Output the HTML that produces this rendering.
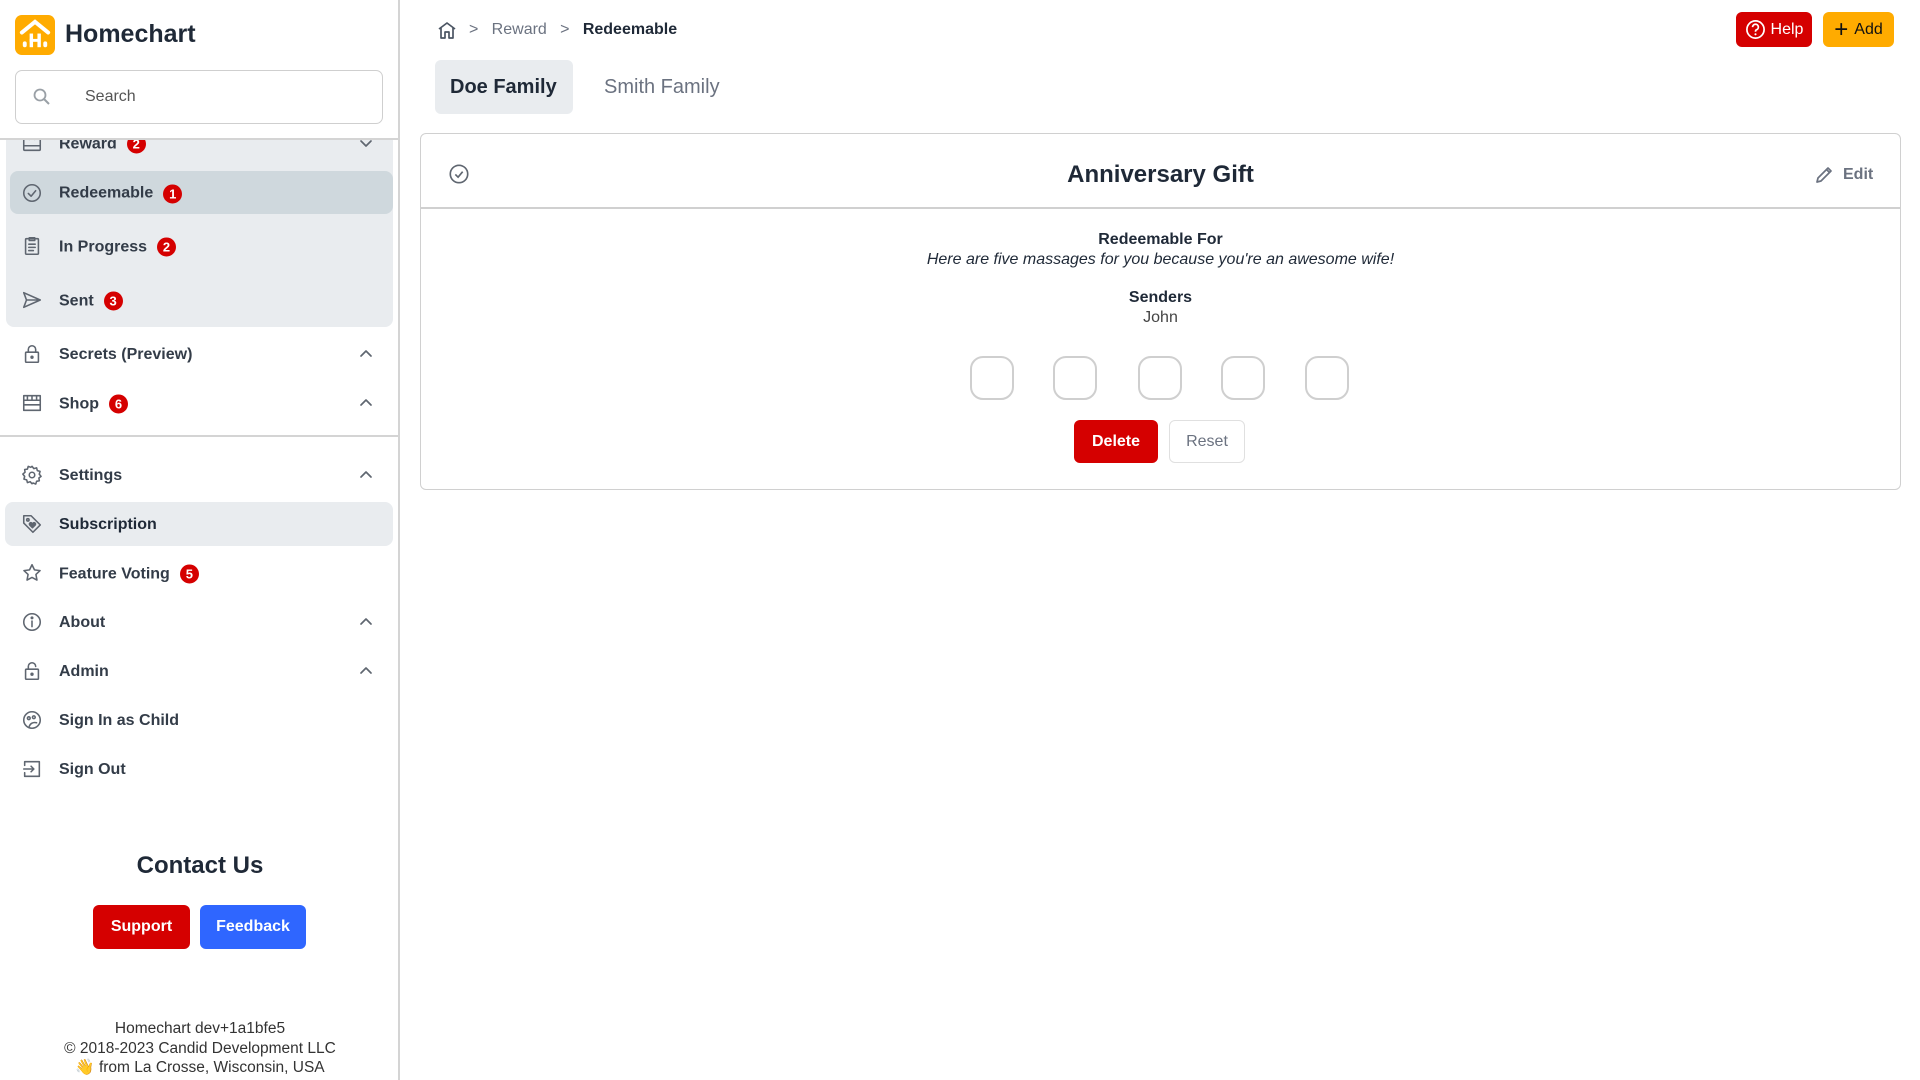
<!DOCTYPE html>
<html><head><meta charset="utf-8"><style>
*{box-sizing:border-box;margin:0;padding:0}
body{width:1920px;height:1080px;overflow:hidden;background:#fff;font-family:"Liberation Sans","DejaVu Sans",sans-serif;color:#1f2937;position:relative}
.abs{position:absolute}
.side{position:absolute;left:0;top:0;width:400px;height:1080px;border-right:2px solid #d4d4d4;background:#fff}
.row{position:absolute;left:10px;width:383px;height:44px;display:flex;align-items:center;font-size:16px;font-weight:bold;color:#333c48}
.row svg{position:absolute;left:11px;width:22px;height:22px}
.row svg.chev{left:349px;width:14px;height:14px}
.row .t{position:absolute;left:49px;top:50%;transform:translateY(-45%);white-space:nowrap;display:flex;align-items:center}
.badge{display:inline-flex;align-items:center;justify-content:center;width:19px;height:19px;border-radius:50%;background:#d50000;color:#fff;font-size:13px;margin-left:10px}
.ic{fill:none;stroke:#5f6670;stroke-width:1.7;stroke-linecap:round;stroke-linejoin:round}
.btn{position:absolute;border-radius:6px;display:flex;align-items:center;justify-content:center;font-weight:bold;font-size:16px}
.box{position:absolute;top:356px;width:44px;height:44px;border:2px solid #cfcfcf;border-radius:13px}
</style></head><body>
<div class="side">
  <svg class="abs" style="left:15px;top:15px" width="40" height="40" viewBox="0 0 41 41"><rect width="41" height="41" rx="7" fill="#ffab00"/><path d="M7 18 L20.5 7 L34 18" fill="none" stroke="#fff" stroke-width="4" stroke-linecap="round"/><rect x="8" y="27" width="4" height="6" rx="2" fill="#fff"/><rect x="29" y="27" width="4" height="6" rx="2" fill="#fff"/><rect x="15" y="19" width="3.5" height="14" fill="#fff"/><rect x="23" y="19" width="3.5" height="14" fill="#fff"/><rect x="15" y="24.5" width="11" height="3" fill="#fff"/></svg>
  <div class="abs" style="left:65px;top:20px;font-size:25px;font-weight:bold;color:#1f2937">Homechart</div>
  <div class="abs" style="left:15px;top:70px;width:368px;height:54px;border:1.5px solid #cfcfcf;border-radius:7px"></div>
  <svg class="abs" style="left:33px;top:88px" width="18" height="18" viewBox="0 0 18 18"><circle cx="7" cy="7" r="5.5" fill="none" stroke="#9aa0a6" stroke-width="1.8"/><path d="M11 11 L16 16" stroke="#9aa0a6" stroke-width="2"/></svg>
  <div class="abs" style="left:85px;top:88px;font-size:16px;color:#555">Search</div>
  <div class="abs" style="left:6px;top:139px;width:387px;height:188px;background:#e9ecef;border-radius:0 0 8px 8px"></div>
  <div class="row" style="top:126px;height:34px;clip-path:inset(13px 0 0 0)"><svg viewBox="0 0 24 24" class="ic"><rect x="3" y="4" width="18" height="16" rx="1"/><path d="M3 15h18M9 8l3-3 3 3"/></svg><span class="t">Reward<span class="badge">2</span></span><svg class="chev ic" viewBox="0 0 14 14"><path d="M2 5l5 5 5-5"/></svg></div>
  <div class="abs" style="left:0;top:138px;width:398px;height:1.5px;background:#d4d4d4"></div>
  <div class="row" style="top:171px;height:43px;background:#cfd8dd;border-radius:8px"><svg viewBox="0 0 24 24" class="ic"><circle cx="12" cy="12" r="9"/><path d="M8 12.5l3 3 5-6"/></svg><span class="t">Redeemable<span class="badge">1</span></span></div>
  <div class="row" style="top:224px"><svg viewBox="0 0 24 24" class="ic"><rect x="5" y="4" width="14" height="17" rx="1"/><path d="M9 3h6v3H9zM8.5 10h7M8.5 13.5h7M8.5 17h5"/></svg><span class="t">In Progress<span class="badge">2</span></span></div>
  <div class="row" style="top:278px"><svg viewBox="0 0 24 24" class="ic"><path d="M3 4l18 8-18 8 3-8zM6 12h15"/></svg><span class="t">Sent<span class="badge">3</span></span></div>
  <div class="row" style="top:332px"><svg viewBox="0 0 24 24" class="ic"><rect x="5" y="10" width="14" height="11" rx="1"/><path d="M8 10V7a4 4 0 0 1 8 0v3"/><circle cx="12" cy="15.5" r="1" fill="#5f6670"/></svg><span class="t">Secrets (Preview)</span><svg class="chev ic" viewBox="0 0 14 14"><path d="M2 9l5-5 5 5"/></svg></div>
  <div class="row" style="top:381px"><svg viewBox="0 0 24 24" class="ic"><path d="M3 4h18v5H3zM3 9v11h18V9M7 4v5M12 4v5M17 4v5M3 14h18"/></svg><span class="t">Shop<span class="badge">6</span></span><svg class="chev ic" viewBox="0 0 14 14"><path d="M2 9l5-5 5 5"/></svg></div>
  <div class="abs" style="left:0;top:435px;width:398px;height:2px;background:#d4d4d4"></div>
  <div class="row" style="top:453px"><svg viewBox="0 0 24 24" class="ic"><circle cx="12" cy="12" r="3"/><path d="M12 2.5l2 2.5 3-.8.8 3 3 .9-.9 3 2 2.4-2.4 1.8.5 3-3 .6-.9 3-3-1.2L12 21.5l-2-2.2-3 1-.8-3-3-.8.8-3L2 11l2.4-2-.4-3 3-.4.9-3 2.8 1z"/></svg><span class="t">Settings</span><svg class="chev ic" viewBox="0 0 14 14"><path d="M2 9l5-5 5 5"/></svg></div>
  <div class="row" style="top:502px;width:388px;left:5px;background:#e9ecef;border-radius:8px"><svg viewBox="0 0 24 24" class="ic" style="left:16px"><path d="M3 3h8l10 10-8 8L3 11z"/><circle cx="7.5" cy="7.5" r="1.3"/><path d="M12.5 16l-3-3a1.5 1.5 0 0 1 2.2-2l.8.8.8-.8a1.5 1.5 0 0 1 2.2 2z" fill="#5f6670"/></svg><span class="t" style="left:54px;color:#1f2937">Subscription</span></div>
  <div class="row" style="top:551px"><svg viewBox="0 0 24 24" class="ic"><path d="M12 3l2.7 5.6 6.1.8-4.5 4.2 1.1 6.1L12 16.8l-5.4 2.9 1.1-6.1-4.5-4.2 6.1-.8z"/></svg><span class="t">Feature Voting<span class="badge">5</span></span></div>
  <div class="row" style="top:600px"><svg viewBox="0 0 24 24" class="ic"><circle cx="12" cy="12" r="9"/><path d="M12 11v6"/><circle cx="12" cy="7.5" r=".8" fill="#5f6670"/></svg><span class="t">About</span><svg class="chev ic" viewBox="0 0 14 14"><path d="M2 9l5-5 5 5"/></svg></div>
  <div class="row" style="top:649px"><svg viewBox="0 0 24 24" class="ic"><rect x="5" y="10" width="14" height="11" rx="1"/><path d="M8 10V7a4 4 0 0 1 8 0"/><circle cx="12" cy="15.5" r="1" fill="#5f6670"/></svg><span class="t">Admin</span><svg class="chev ic" viewBox="0 0 14 14"><path d="M2 9l5-5 5 5"/></svg></div>
  <div class="row" style="top:698px"><svg viewBox="0 0 24 24" class="ic"><circle cx="12" cy="12" r="9"/><circle cx="8.5" cy="10" r="1.5"/><circle cx="14" cy="9" r="1.5"/><path d="M9 19c1-3 4-5 8-4" /></svg><span class="t">Sign In as Child</span></div>
  <div class="row" style="top:747px"><svg viewBox="0 0 24 24" class="ic"><path d="M4 8V4h16v16H4v-4M3 12h11M11 9l3 3-3 3"/></svg><span class="t">Sign Out</span></div>
  <div class="abs" style="left:0;width:400px;top:852px;text-align:center;font-size:24px;font-weight:bold;color:#1f2937">Contact Us</div>
  <div class="btn" style="left:93px;top:905px;width:97px;height:44px;background:#d50000;color:#fff">Support</div>
  <div class="btn" style="left:200px;top:905px;width:106px;height:44px;background:#2f66ff;color:#fff">Feedback</div>
  <div class="abs" style="left:0;width:400px;top:1019px;text-align:center;font-size:15.5px;line-height:19.5px;color:#333">Homechart dev+1a1bfe5<br>© 2018-2023 Candid Development LLC<br><span style="color:#f2b01e">👋</span> from La Crosse, Wisconsin, USA</div>
</div>

<svg class="abs" style="left:437px;top:21px" width="20" height="19" viewBox="0 0 20 19"><path d="M2 8L10 2l8 6M4 7v10h4v-6h4v6h4V7" fill="none" stroke="#4b5563" stroke-width="1.7" stroke-linejoin="round"/></svg>
<div class="abs" style="left:469px;top:21px;font-size:16px;color:#6b7280">&gt;&nbsp;&nbsp;&nbsp;Reward&nbsp;&nbsp;&nbsp;&gt;&nbsp;&nbsp;&nbsp;<span style="color:#1f2937;font-weight:bold">Redeemable</span></div>
<div class="btn" style="left:1736px;top:12px;width:76px;height:35px;background:#d50000;color:#fff;font-weight:normal"><svg width="21" height="21" viewBox="0 0 22 22" style="margin-right:5px"><circle cx="11" cy="11" r="9" fill="none" stroke="#fff" stroke-width="1.8"/><path d="M8 8.5a3 3 0 1 1 4 2.8c-.8.4-1 1-1 2" fill="none" stroke="#fff" stroke-width="1.8"/><circle cx="11" cy="16" r="1.1" fill="#fff"/></svg>Help</div>
<div class="btn" style="left:1823px;top:12px;width:71px;height:35px;background:#ffab00;color:#111;font-weight:normal"><span style="font-size:24px;margin-right:6px;line-height:1">+</span>Add</div>

<div class="abs" style="left:435px;top:60px;width:138px;height:54px;background:#e9ecef;border-radius:6px"></div>
<div class="abs" style="left:450px;top:76px;font-size:20px;font-weight:bold;color:#1f2937">Doe Family</div>
<div class="abs" style="left:604px;top:76px;font-size:20px;color:#6b7280">Smith Family</div>

<div class="abs" style="left:420px;top:133px;width:1481px;height:357px;border:1.5px solid #d0d0d0;border-radius:6px"></div>
<div class="abs" style="left:421px;top:207px;width:1479px;height:1.5px;background:#d0d0d0"></div>
<svg class="abs" style="left:448px;top:163px" width="22" height="22" viewBox="0 0 24 24"><circle cx="12" cy="12" r="9.5" fill="none" stroke="#5f6670" stroke-width="1.8"/><path d="M8 12.5l3 3 5-6" fill="none" stroke="#5f6670" stroke-width="1.8"/></svg>
<div class="abs" style="left:420px;width:1481px;top:161px;text-align:center;font-size:24px;font-weight:bold;color:#1f2937">Anniversary Gift</div>
<svg class="abs" style="left:1814px;top:164px" width="21" height="21" viewBox="0 0 21 21"><path d="M3 18l1-4L14 4l3 3L7 17z M12.5 5.5l3 3" fill="none" stroke="#6b7280" stroke-width="1.7" stroke-linejoin="round"/></svg>
<div class="abs" style="left:1843px;top:166px;font-size:16px;color:#6b7280;font-weight:bold">Edit</div>

<div class="abs" style="left:420px;width:1481px;top:230px;text-align:center;font-size:16px;line-height:20px;color:#1f2937"><b>Redeemable For</b><br><i>Here are five massages for you because you're an awesome wife!</i></div>
<div class="abs" style="left:420px;width:1481px;top:288px;text-align:center;font-size:16px;line-height:20px;color:#1f2937"><b>Senders</b><br><span style="color:#444">John</span></div>
<div class="box" style="left:970px"></div>
<div class="box" style="left:1053px"></div>
<div class="box" style="left:1138px"></div>
<div class="box" style="left:1221px"></div>
<div class="box" style="left:1305px"></div>
<div class="btn" style="left:1074px;top:420px;width:84px;height:43px;background:#d50000;color:#fff">Delete</div>
<div class="btn" style="left:1169px;top:420px;width:76px;height:43px;border:1.5px solid #e0e0e0;color:#6b7280;font-weight:normal">Reset</div>
</body></html>
